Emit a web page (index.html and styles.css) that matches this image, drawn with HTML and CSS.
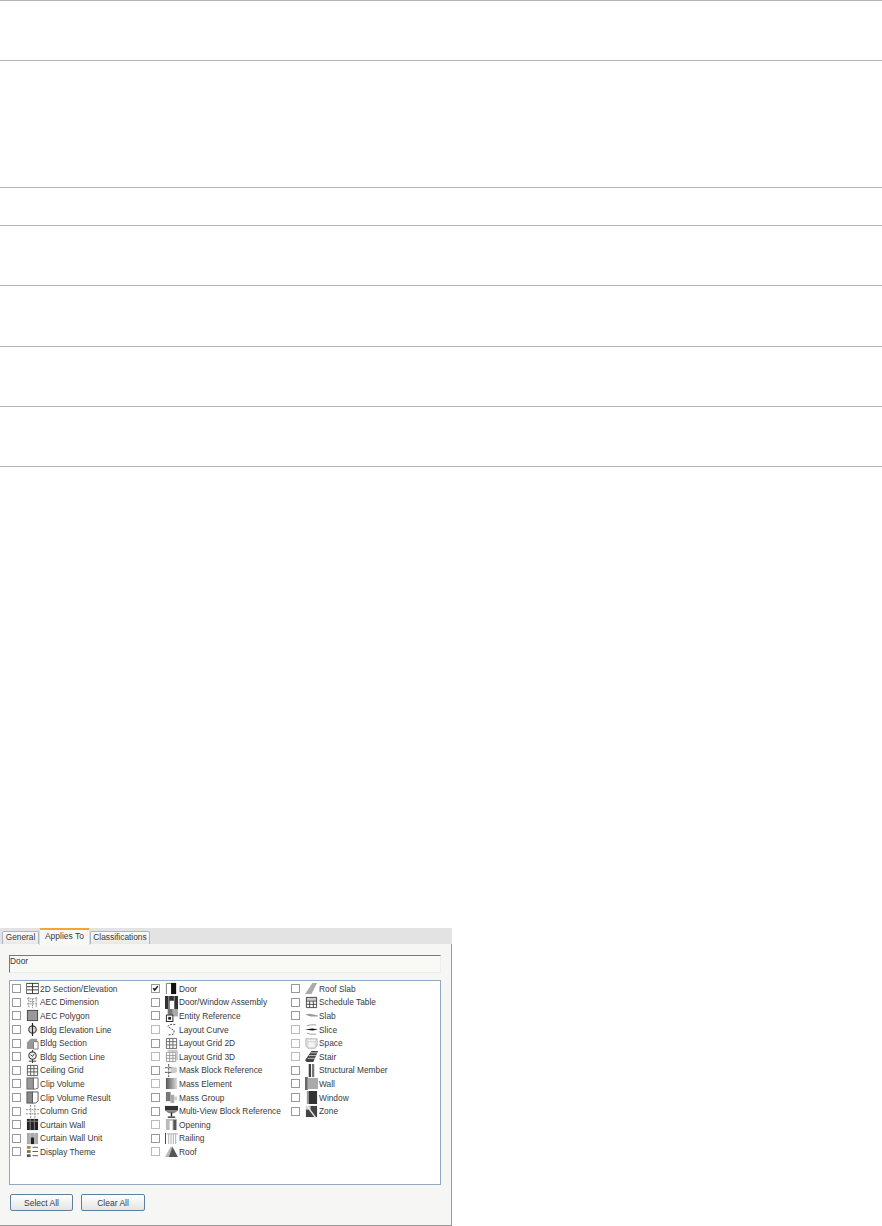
FILE: index.html
```html
<!DOCTYPE html>
<html lang="en">
<head>
  <meta charset="UTF-8">
  <title>Applies To</title>
  <link rel="stylesheet" href="styles.css">
</head>
<body>

  <!-- Empty table rows above the picture -->
  <div class="rule-table">
    <div class="rule-row h60"></div>
    <div class="rule-row h127"></div>
    <div class="rule-row h38"></div>
    <div class="rule-row h60"></div>
    <div class="rule-row h61"></div>
    <div class="rule-row h60"></div>
    <div class="rule-row h60"></div>
    <div class="rule-row h1"></div>
  </div>

  <!-- Dialog -->
  <div class="dialog">
    <div class="tabs">
      <span class="tab tab-general">General</span>
      <span class="tab tab-active">Applies To</span>
      <span class="tab tab-class">Classifications</span>
    </div>
    <div class="panel">
      <div class="name-field">Door</div>
      <div class="list-box">

        <div class="item"><span class="check"></span>
          <svg class="icon" viewBox="0 0 14 14"><path d="M1 1.500h12M1 5h12M1 8.500h12M1 12.500h12M7 1v11.500" stroke="#333" fill="none"/><path d="M.5 1v12M13.500 1v12" stroke="#666"/></svg>
          <span class="label">2D Section/Elevation</span></div>
        <div class="item"><span class="check"></span>
          <svg class="icon" viewBox="0 0 14 14"><path d="M1 3h12M1 8.500h12M3 1v12M11 1v12M7 3v10M4 6h6" stroke="#888" stroke-dasharray="2 1" fill="none"/></svg>
          <span class="label">AEC Dimension</span></div>
        <div class="item"><span class="check"></span>
          <svg class="icon" viewBox="0 0 14 14"><rect x="1.500" y="1.500" width="11" height="11" fill="#999" stroke="#444"/></svg>
          <span class="label">AEC Polygon</span></div>
        <div class="item"><span class="check"></span>
          <svg class="icon" viewBox="0 0 14 14"><circle cx="7" cy="7" r="4" fill="#ddd" stroke="#444" stroke-width="1.300"/><path d="M7 0v14" stroke="#222" stroke-width="1.300"/></svg>
          <span class="label">Bldg Elevation Line</span></div>
        <div class="item"><span class="check"></span>
          <svg class="icon" viewBox="0 0 14 14"><path d="M1 6l4-4h7v11H1z" fill="#999"/><path d="M9 5h4v8H8V6z" fill="#fff" stroke="#777"/></svg>
          <span class="label">Bldg Section</span></div>
        <div class="item"><span class="check"></span>
          <svg class="icon" viewBox="0 0 14 14"><circle cx="7" cy="6" r="4" fill="#eee" stroke="#444" stroke-width="1.200"/><path d="M7 0v2M7 10v4M5 5l2 2 2-3M3 12h8" stroke="#333" fill="none"/></svg>
          <span class="label">Bldg Section Line</span></div>
        <div class="item"><span class="check"></span>
          <svg class="icon" viewBox="0 0 14 14"><path d="M1.500 1.500h11v11h-11zM5 1.500v11M8.500 1.500v11M1.500 5h11M1.500 8.500h11" stroke="#555" fill="none"/></svg>
          <span class="label">Ceiling Grid</span></div>
        <div class="item"><span class="check"></span>
          <svg class="icon" viewBox="0 0 14 14"><rect x="1" y="1" width="7" height="12" fill="#999" stroke="#666"/><path d="M8 1h5v11l-3 1H8z" fill="#fff" stroke="#666"/></svg>
          <span class="label">Clip Volume</span></div>
        <div class="item"><span class="check"></span>
          <svg class="icon" viewBox="0 0 14 14"><rect x="1" y="1" width="6" height="12" fill="#888" stroke="#555"/><path d="M7 1h6v10l-3 2H7z" fill="#fff" stroke="#555"/></svg>
          <span class="label">Clip Volume Result</span></div>
        <div class="item"><span class="check"></span>
          <svg class="icon" viewBox="0 0 14 14"><path d="M0 5h14M0 9.500h14M5 0v14M9.500 0v14" stroke="#888" stroke-dasharray="2 1" fill="none"/></svg>
          <span class="label">Column Grid</span></div>
        <div class="item"><span class="check"></span>
          <svg class="icon" viewBox="0 0 14 14"><rect x="1" y="1" width="12" height="12" fill="#222"/><path d="M1 3.500h12M4.500 1v12M9 1v12" stroke="#888"/></svg>
          <span class="label">Curtain Wall</span></div>
        <div class="item"><span class="check"></span>
          <svg class="icon" viewBox="0 0 14 14"><rect x="1" y="1" width="12" height="12" fill="#aaa"/><rect x="5" y="6" width="4" height="7" fill="#222"/><path d="M4.500 1v12M9.500 1v12" stroke="#ccc"/></svg>
          <span class="label">Curtain Wall Unit</span></div>
        <div class="item"><span class="check"></span>
          <svg class="icon" viewBox="0 0 14 14"><rect x="1" y="1" width="4" height="3" fill="#b9852c"/><rect x="1" y="5.500" width="4" height="3" fill="#5f8a3a"/><rect x="1" y="10" width="4" height="3" fill="#555"/><path d="M7 2.500h6M7 7h6M7 11.500h6" stroke="#555"/></svg>
          <span class="label">Display Theme</span></div>

        <div class="item"><span class="check checked"><svg viewBox="0 0 9 9"><path d="M1.500 4l2 2.500 4-5" fill="none" stroke="#111" stroke-width="1.800"/></svg></span>
          <svg class="icon" viewBox="0 0 14 14"><path d="M1.500 13V1.500h5" fill="none" stroke="#777"/><rect x="6.500" y="1" width="5.500" height="12" fill="#111"/></svg>
          <span class="label">Door</span></div>
        <div class="item"><span class="check"></span>
          <svg class="icon" viewBox="0 0 14 14"><path d="M0 0h14v14h-4V5H5v9H0z" fill="#333"/><path d="M4 0v14M10 0v5" stroke="#999"/></svg>
          <span class="label">Door/Window Assembly</span></div>
        <div class="item"><span class="check"></span>
          <svg class="icon" viewBox="0 0 14 14"><rect x="3" y="0" width="11" height="8" fill="#aaa"/><rect x="3" y="0" width="5" height="6" fill="#777"/><rect x="1.500" y="6.500" width="7" height="7" fill="#fff" stroke="#222"/><rect x="3.500" y="8.500" width="3" height="3" fill="#222"/></svg>
          <span class="label">Entity Reference</span></div>
        <div class="item item-faint"><span class="check"></span>
          <svg class="icon" viewBox="0 0 14 14"><path d="M11 1.500H5L3 4l7 4-1 4-6 1" fill="none" stroke="#333" stroke-dasharray="2 1.500"/></svg>
          <span class="label">Layout Curve</span></div>
        <div class="item"><span class="check"></span>
          <svg class="icon" viewBox="0 0 14 14"><path d="M1.500 1.500h11v11h-11zM5 1.500v11M8.500 1.500v11M1.500 5h11M1.500 8.500h11" stroke="#666" fill="none"/></svg>
          <span class="label">Layout Grid 2D</span></div>
        <div class="item item-faint"><span class="check"></span>
          <svg class="icon" viewBox="0 0 14 14"><path d="M1.500 2.500h10v10h-10zM5 2.500v10M8.500 2.500v10M1.500 6h10M1.500 9h10M3 1h10v10" stroke="#999" fill="none"/></svg>
          <span class="label">Layout Grid 3D</span></div>
        <div class="item"><span class="check"></span>
          <svg class="icon" viewBox="0 0 14 14"><circle cx="9.500" cy="6.500" r="3.500" fill="#ccc"/><path d="M4 0v14M0 4h7M0 9h7" stroke="#444" stroke-dasharray="3 1"/></svg>
          <span class="label">Mask Block Reference</span></div>
        <div class="item item-faint"><span class="check"></span>
          <svg class="icon" viewBox="0 0 14 14"><defs><linearGradient id="mass"><stop offset="0" stop-color="#555"/><stop offset="1" stop-color="#ddd"/></linearGradient></defs><rect x="1" y="1" width="12" height="12" fill="url(#mass)"/></svg>
          <span class="label">Mass Element</span></div>
        <div class="item"><span class="check"></span>
          <svg class="icon" viewBox="0 0 14 14"><rect x="1" y="1" width="5" height="10" fill="#777"/><rect x="6" y="4" width="4" height="9" fill="#aaa"/><rect x="10" y="6" width="3" height="4" fill="#ccc"/></svg>
          <span class="label">Mass Group</span></div>
        <div class="item"><span class="check"></span>
          <svg class="icon" viewBox="0 0 14 14"><rect x="0" y="1" width="14" height="5" fill="#333"/><path d="M0 6h14l-4 3H4z" fill="#888"/><path d="M7 8v4M3 13h8" stroke="#222" stroke-width="1.500"/></svg>
          <span class="label">Multi-View Block Reference</span></div>
        <div class="item item-faint"><span class="check"></span>
          <svg class="icon" viewBox="0 0 14 14"><rect x="1" y="1" width="12" height="12" fill="#bbb"/><rect x="5" y="3" width="3" height="10" fill="#fff"/><rect x="9" y="2" width="3" height="11" fill="#555"/></svg>
          <span class="label">Opening</span></div>
        <div class="item"><span class="check"></span>
          <svg class="icon" viewBox="0 0 14 14"><path d="M.5 1v12" stroke="#333"/><path d="M2 2h12M4 2v11M6.500 2v11M9 2v11M11.500 2v11" stroke="#aaa" fill="none"/></svg>
          <span class="label">Railing</span></div>
        <div class="item item-faint"><span class="check"></span>
          <svg class="icon" viewBox="0 0 14 14"><path d="M0 13L6 2h2L4 13z" fill="#bbb"/><path d="M4 13L8 2l6 11z" fill="#555"/></svg>
          <span class="label">Roof</span></div>

        <div class="item"><span class="check"></span>
          <svg class="icon" viewBox="0 0 14 14"><path d="M0 13L8 1h5L7 13z" fill="#aaa"/></svg>
          <span class="label">Roof Slab</span></div>
        <div class="item"><span class="check"></span>
          <svg class="icon" viewBox="0 0 14 14"><rect x="1" y="1" width="12" height="4" fill="#ccc"/><path d="M1.500 1.500h11v11h-11zM1.500 5.500h11M5 5.500v7M9 5.500v7M1.500 9h11" stroke="#444" fill="none"/></svg>
          <span class="label">Schedule Table</span></div>
        <div class="item"><span class="check"></span>
          <svg class="icon" viewBox="0 0 14 14"><path d="M0 6l5-1 9 2v1H6z" fill="#999"/></svg>
          <span class="label">Slab</span></div>
        <div class="item item-faint"><span class="check"></span>
          <svg class="icon" viewBox="0 0 14 14"><path d="M2 3l4-1h6M2 11l4 1h6" stroke="#999" fill="none"/><path d="M0 7l8-1 6 1-6 1z" fill="#111"/></svg>
          <span class="label">Slice</span></div>
        <div class="item item-faint"><span class="check"></span>
          <svg class="icon" viewBox="0 0 14 14"><path d="M1 2h12v7l-2 3H3L1 9z" fill="#f4f4f4" stroke="#aaa"/><path d="M1 2l2 3h8l2-3M3 5v7M11 5v7" stroke="#ccc" fill="none"/></svg>
          <span class="label">Space</span></div>
        <div class="item item-faint"><span class="check"></span>
          <svg class="icon" viewBox="0 0 14 14"><path d="M0 11L7 1h7l-5 12H2z" fill="#444"/><path d="M3 9h8M4 6h8M6 3h7" stroke="#ccc"/></svg>
          <span class="label">Stair</span></div>
        <div class="item"><span class="check"></span>
          <svg class="icon" viewBox="0 0 14 14"><rect x="4" y="0" width="2.500" height="14" fill="#444"/><rect x="7.500" y="0" width="2.500" height="14" fill="#777"/></svg>
          <span class="label">Structural Member</span></div>
        <div class="item"><span class="check"></span>
          <svg class="icon" viewBox="0 0 14 14"><rect x="0" y="0" width="3" height="14" fill="#666"/><rect x="3" y="1" width="11" height="12" fill="#aaa"/></svg>
          <span class="label">Wall</span></div>
        <div class="item"><span class="check"></span>
          <svg class="icon" viewBox="0 0 14 14"><rect x="2" y="0" width="2" height="14" fill="#999"/><rect x="4" y="0" width="9" height="14" fill="#333"/></svg>
          <span class="label">Window</span></div>
        <div class="item"><span class="check"></span>
          <svg class="icon" viewBox="0 0 14 14"><rect x="1" y="1" width="12" height="12" fill="#444"/><path d="M1 1h5v4H1z" fill="#ccc"/><path d="M2 1l9 12" stroke="#eee" stroke-width="1.500"/></svg>
          <span class="label">Zone</span></div>

      </div>
      <div class="buttons">
        <button class="btn btn-select">Select All</button>
        <button class="btn btn-clear">Clear All</button>
      </div>
    </div>
  </div>

</body>
</html>
```

FILE: styles.css
```css
body {
  margin: 0;
  background-color: #fff;
  font-family: "Liberation Sans", Arial, sans-serif;
}

/* Rules at the top of the page */
.rule-row {
  border-top: 1px solid #b5b5b5;
  box-sizing: border-box;
}
.h1 { height: 1px; }
.h38 { height: 38px; }
.h60 { height: 60px; }
.h61 { height: 61px; }
.h127 { height: 127px; }

/* Dialog */
.dialog {
  width: 452px;
  height: 298px;
  margin-top: 461px;
  font-size: 8.350px;
  color: #3a3a3a;
}

.tabs {
  display: flex;
  align-items: flex-end;
  height: 16px;
  padding-left: 2px;
  background-color: #e3e3e3;
}

.tab {
  box-sizing: border-box;
  height: 13px;
  line-height: 11px;
  text-align: center;
  background: linear-gradient(#fbfbfa, #e8e8e4);
  border: 1px solid #a9b8c6;
  border-bottom: none;
  border-radius: 2px 2px 0 0;
}
.tab-general { width: 37px; }
.tab-class { width: 60px; }
.tab-active {
  position: relative;
  z-index: 1;
  width: 51px;
  height: 17px;
  margin-bottom: -1px;
  line-height: 13px;
  font-size: 8.500px;
  background: #f8f8f6;
  border: 1px solid #dcdcdc;
  border-top: 2px solid #f0a830;
  border-bottom: none;
}

.panel {
  box-sizing: border-box;
  height: 282px;
  padding: 11px 10px 0 9px;
  background-color: #f6f6f4;
  border-right: 1px solid #9a9a9a;
  border-bottom: 1px solid #9a9a9a;
}

.name-field {
  box-sizing: border-box;
  height: 18px;
  line-height: 11px;
  background-color: #f9f9f5;
  border-top: 1px solid #777;
  border-left: 1px solid #777;
  border-right: 1px solid #eeeee8;
  border-bottom: 1px solid #eeeee8;
}

.list-box {
  box-sizing: border-box;
  display: grid;
  grid-auto-flow: column;
  grid-template-rows: repeat(13, 13.600px);
  grid-template-columns: 139px 140px 1fr;
  align-content: start;
  height: 205px;
  margin-top: 7px;
  padding: 1px 0 0 2px;
  background-color: #fff;
  border: 1px solid #8ea9c0;
}

.item {
  display: flex;
  align-items: center;
  white-space: nowrap;
}

.check {
  box-sizing: border-box;
  flex: none;
  width: 9px;
  height: 9px;
  margin-right: 5px;
  background-color: #fff;
  border: 1px solid #999;
}
.check svg {
  display: block;
  width: 7px;
  height: 7px;
}
.item-faint .check { border-color: #bbb; }

.icon {
  flex: none;
  width: 13px;
  height: 13px;
  margin-right: 1px;
}

.buttons {
  display: flex;
  gap: 8px;
  margin-top: 9px;
  padding-left: 1px;
}

.btn {
  box-sizing: border-box;
  height: 17px;
  padding: 0;
  font-family: inherit;
  font-size: 8.500px;
  color: #3a3a3a;
  background: linear-gradient(#fff, #e4e4e0);
  border: 1px solid #5f7fa0;
  border-radius: 2px;
}
.btn-select { width: 63px; }
.btn-clear { width: 64px; }
```
